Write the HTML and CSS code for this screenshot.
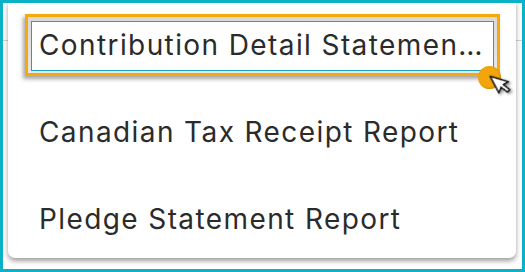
FILE: index.html
```html
<!DOCTYPE html>
<html>
<head>
<meta charset="utf-8">
<link rel="stylesheet" href="styles.css">
</head>
<body>
<div class="frame">
  <div class="backdrop-bar"></div>
  <div class="menu">
    <div class="item item-active">
      <div class="callout">
        <div class="focus">Contribution Detail Statement Report</div>
      </div>
    </div>
    <div class="item">Canadian Tax Receipt Report</div>
    <div class="item">Pledge Statement Report</div>
  </div>
  <div class="cursor">
    <span class="cursor-dot"></span>
    <svg class="cursor-arrow" width="17" height="25" viewBox="0 0 14 21">
      <path d="M1.5 1 L1.5 17 L5.3 13.4 L8.2 19.8 L10.8 18.7 L8 12.4 L13 12.4 Z" fill="#fff" stroke="#111" stroke-width="1.2" stroke-linejoin="round"/>
    </svg>
  </div>
</div>
</body>
</html>
```

FILE: styles.css
```css
html, body {
  margin: 0;
  padding: 0;
  background: #fff;
}

.frame {
  position: relative;
  width: 525px;
  height: 272px;
  box-sizing: border-box;
  border: 3px solid #0ab1c7;
  background: #fff;
  overflow: hidden;
  font-family: "Inter", "Noto Sans", sans-serif;
}

.backdrop-bar {
  height: 37px;
  border-bottom: 1px solid #d2d2d2;
}

.menu {
  position: absolute;
  left: 5px;
  top: -2px;
  width: 508px;
  height: 257px;
  background: #fff;
  border-radius: 0 0 7px 7px;
  box-shadow: 0 3px 5px rgba(0, 0, 0, 0.38);
  overflow: hidden;
}

.item {
  height: 87px;
  display: flex;
  align-items: center;
  padding-left: 31px;
  font-size: 28px;
  letter-spacing: 1.4px;
  color: #2b2b2b;
  white-space: nowrap;
}

.item-active {
  padding-left: 17px;
  padding-right: 16px;
}

.callout {
  width: 100%;
  height: 62px;
  box-sizing: border-box;
  border: 3px solid #f5a90c;
  padding: 4px 3px 2px 3px;
  background: linear-gradient(#d9d9d9, #e6e6e6);
  box-shadow: -2px 3px 4px rgba(0, 0, 0, 0.35);
}

.focus {
  height: 100%;
  box-sizing: border-box;
  border: 1px solid #1aa6ba;
  background: #fff;
  padding: 0 4px 0 7px;
  line-height: 46px;
  overflow: hidden;
  white-space: nowrap;
  text-overflow: ellipsis;
}

.cursor {
  position: absolute;
  left: 475px;
  top: 63px;
  width: 44px;
  height: 40px;
}

.cursor-dot {
  position: absolute;
  left: 0;
  top: 0;
  width: 23px;
  height: 23px;
  border-radius: 50%;
  background: #f3a50b;
  box-shadow: inset -1px -1px 2px rgba(150, 90, 0, 0.35);
}

.cursor-arrow {
  position: absolute;
  left: 10px;
  top: 9px;
  transform: rotate(-28deg);
  transform-origin: 2px 1px;
  filter: drop-shadow(1px 2px 1.5px rgba(0, 0, 0, 0.45));
}
```
